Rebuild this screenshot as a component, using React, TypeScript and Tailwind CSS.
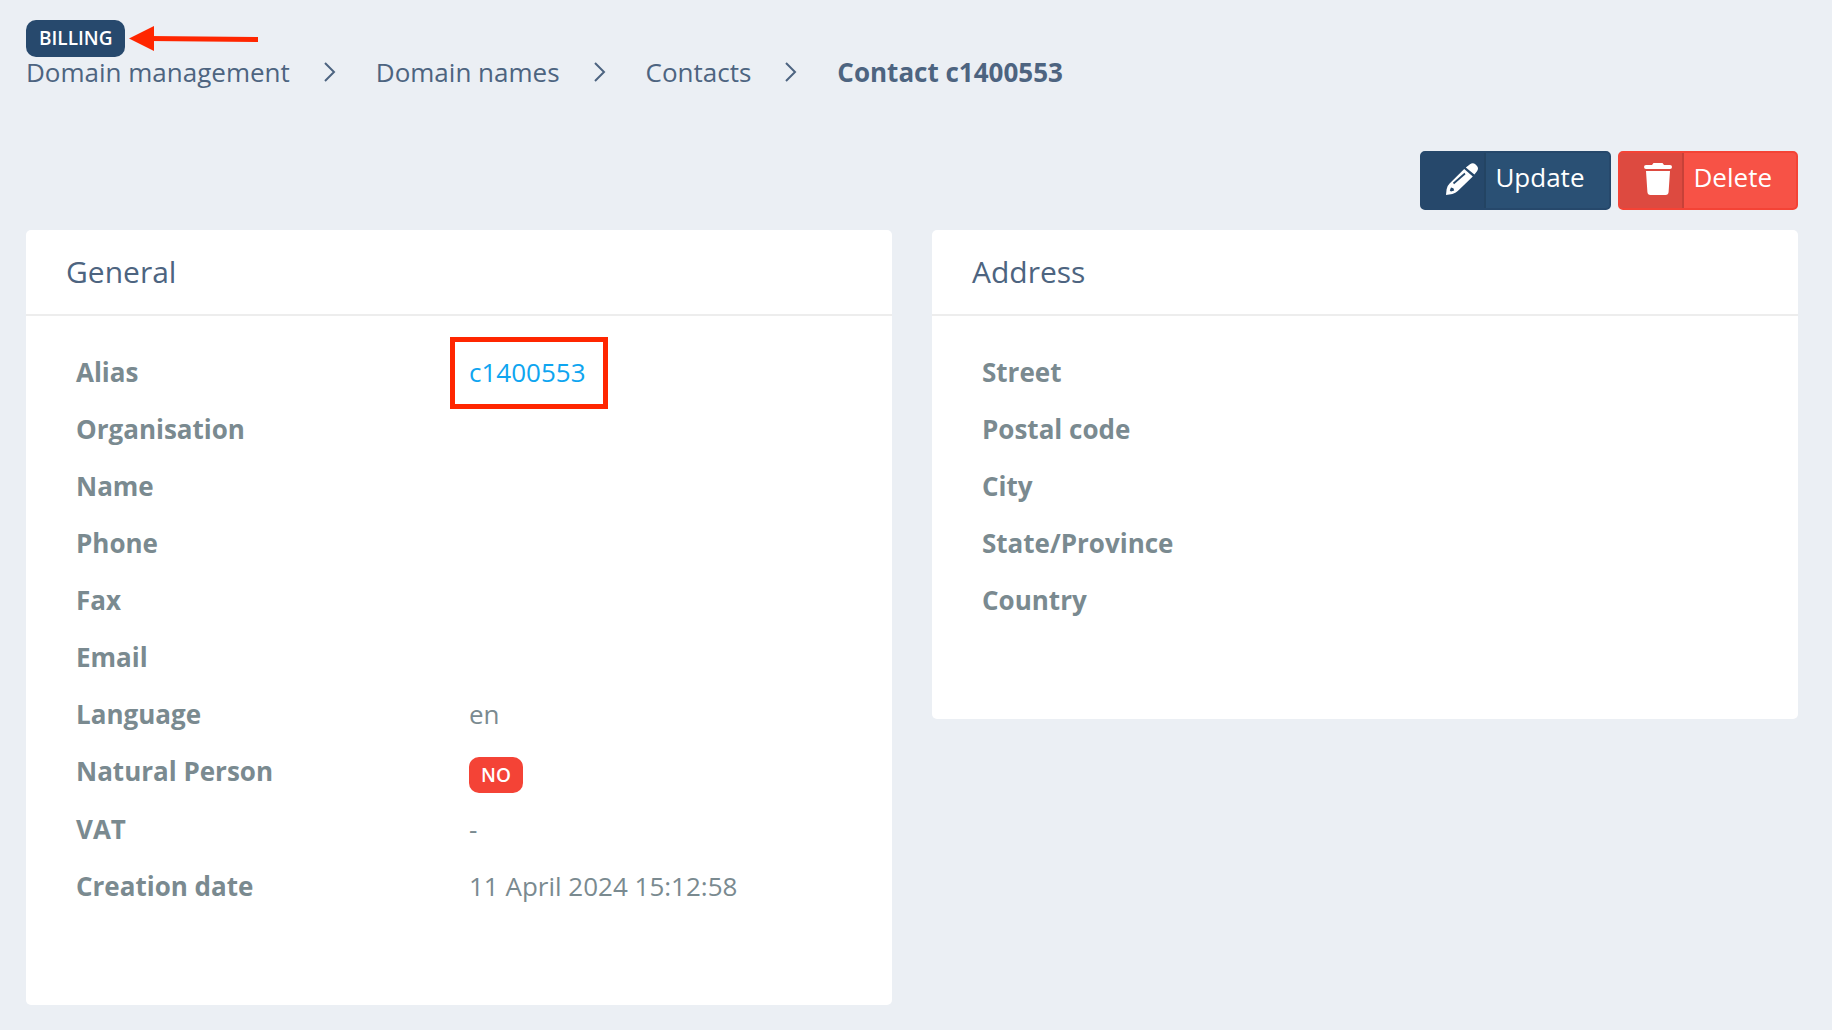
import React from "react";

const CRUMBS = ["Domain management", "Domain names", "Contacts"];

function Chevron() {
  return (
    <svg viewBox="0 0 16 24" className="h-6 w-4 shrink-0" fill="none" stroke="currentColor" strokeWidth="2" aria-hidden="true">
      <path d="M3 3 L12 12 L3 21" />
    </svg>
  );
}

function Card({ title, children }: { title: string; children: React.ReactNode }) {
  return (
    <section className="rounded-[5px] bg-white pb-[91px]">
      <h2 className="border-b-2 border-[#ededed] px-10 py-5 text-[30px] leading-[44px] text-[#4d6480]">{title}</h2>
      <dl className="px-[50px] pt-[27px]">{children}</dl>
    </section>
  );
}

function Row({ label, children }: { label: string; children?: React.ReactNode }) {
  return (
    <div className="flex min-h-[57px] items-center">
      <dt className="w-[393px] shrink-0 font-bold">{label}</dt>
      <dd>{children}</dd>
    </div>
  );
}

export default function App() {
  return (
    <main className="min-h-screen bg-[#ebeff4] px-[26px] pt-5 pb-6 font-['Open_Sans',sans-serif] text-[26px] leading-9 text-[#7a8a90]">
      <div className="flex items-center gap-1">
        <span className="rounded-[10px] bg-[#27496d] px-[13px] text-[19px] leading-[37px] font-semibold text-white">BILLING</span>
        <svg viewBox="0 0 130 26" className="h-[26px] w-[130px]" aria-hidden="true">
          <path d="M20 12.5 L129 13.5" stroke="#ff2600" strokeWidth="5" />
          <path d="M0 12.5 L25 0 V25 Z" fill="#ff2600" />
        </svg>
      </div>
      <nav aria-label="Breadcrumb" className="flex items-center leading-[30px] text-[#4d6480]">
        {CRUMBS.map((crumb) => (
          <React.Fragment key={crumb}>
            <a href="#">{crumb}</a>
            <span className="pr-[38px] pl-8"><Chevron /></span>
          </React.Fragment>
        ))}
        <span className="font-bold">Contact c1400553</span>
      </nav>
      <div className="mt-16 flex justify-end gap-[7px] pr-2 text-white">
        <button className="flex h-[59px] rounded-[5px] border-2 border-[#26486b] bg-[#2a5074]">
          <span className="flex h-full w-16 items-center justify-end border-r-2 border-[#234463] bg-[#26486b] pr-1.5 pb-1">
            <svg viewBox="0 0 32 32" className="h-8 w-8" aria-hidden="true">
              <path fill="#fff" d="M22.4 2.6 L24 1.2 Q26.8 -1 29.6 1.4 L31 2.9 Q33 5.6 31 8.2 L28.4 11.6 L19.8 4.6 Z M18.2 6 L26.8 13.4 L11.8 28 Q9.6 30.2 6.4 31 L0 32 L0.6 26.2 Q1.2 22.6 3.6 20.4 Z" />
              <path d="M7.5 20.5 L19 10.5" stroke="#26486b" strokeWidth="1.8" fill="none" />
              <path d="M5 24.5 L7.4 25.2 L8.2 27.6 L5 28.6 L3.8 27.4 Z" fill="#26486b" />
            </svg>
          </span>
          <span className="pt-1.5 pr-6 pl-[9px]">Update</span>
        </button>
        <button className="flex h-[59px] rounded-[5px] border-2 border-[#f44336] bg-[#f75246]">
          <span className="flex h-full w-16 items-center justify-end border-r-2 border-[#c74138] bg-[#dd4a40] pr-2.5 pb-1">
            <svg viewBox="0 0 28 32" className="h-8 w-7" fill="#fff" aria-hidden="true">
              <path d="M8 2 L9.5 0 H18.5 L20 2 H26 Q28 2 28 4 Q28 6 26 6 H2 Q0 6 0 4 Q0 2 2 2 Z M2 8 H26 L24.6 29 Q24.4 32 21.5 32 H6.5 Q3.6 32 3.4 29 Z" />
            </svg>
          </span>
          <span className="pt-1.5 pr-6 pl-[10px]">Delete</span>
        </button>
      </div>
      <div className="mt-5 grid grid-cols-2 items-start gap-10 pr-2">
        <Card title="General">
          <Row label="Alias">
            <a href="#" className="relative text-[#0ea5f0]">
              c1400553
              <span className="absolute -top-[17px] -right-[22px] -bottom-[19px] -left-[19px] border-5 border-[#ff2600]" />
            </a>
          </Row>
          <Row label="Organisation" />
          <Row label="Name" />
          <Row label="Phone" />
          <Row label="Fax" />
          <Row label="Email" />
          <Row label="Language">en</Row>
          <Row label="Natural Person">
            <span className="mt-[15px] mb-[7px] block rounded-[10px] bg-[#f44336] px-3 text-[19px] leading-9 font-semibold text-white">NO</span>
          </Row>
          <Row label="VAT">-</Row>
          <Row label="Creation date">11 April 2024 15:12:58</Row>
        </Card>
        <Card title="Address">
          <Row label="Street" />
          <Row label="Postal code" />
          <Row label="City" />
          <Row label="State/Province" />
          <Row label="Country" />
        </Card>
      </div>
    </main>
  );
}
